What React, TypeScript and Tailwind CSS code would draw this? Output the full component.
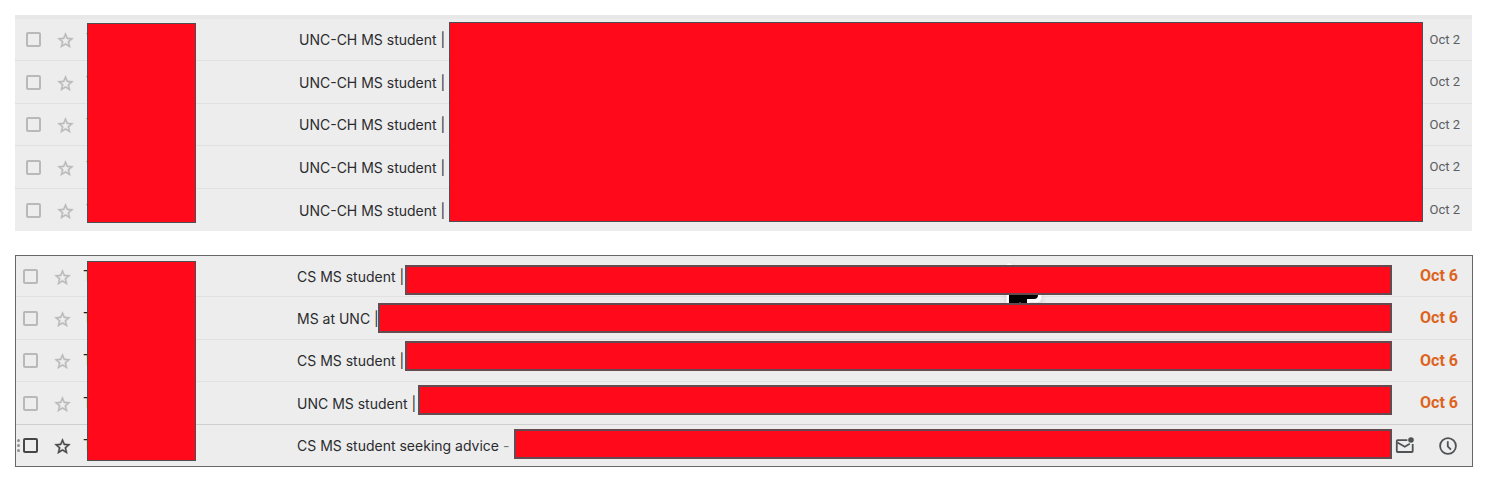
import React from "react";

type Row = {
  id: string;
  subject: string;
  suffix?: string;
  date?: string;
  height: string;
  active?: boolean;
};

const october2: Row[] = [
  { id: "a1", subject: "UNC-CH MS student |", date: "Oct 2", height: "h-[42px]" },
  { id: "a2", subject: "UNC-CH MS student |", date: "Oct 2", height: "h-[43px]" },
  { id: "a3", subject: "UNC-CH MS student |", date: "Oct 2", height: "h-[42px]" },
  { id: "a4", subject: "UNC-CH MS student |", date: "Oct 2", height: "h-[43px]" },
  { id: "a5", subject: "UNC-CH MS student |", date: "Oct 2", height: "h-[42px]" },
];

const october6: Row[] = [
  { id: "b1", subject: "CS MS student |", date: "Oct 6", height: "h-[41px]" },
  { id: "b2", subject: "MS at UNC |", date: "Oct 6", height: "h-[43px]" },
  { id: "b3", subject: "CS MS student |", date: "Oct 6", height: "h-[42px]" },
  { id: "b4", subject: "UNC MS student |", date: "Oct 6", height: "h-[43px]" },
  { id: "b5", subject: "CS MS student seeking advice", suffix: " -", height: "h-[41px]", active: true },
];

const bars = [
  "top-[9px] left-[389px]",
  "top-[47px] left-[362px]",
  "top-[85px] left-[389px]",
  "top-[129px] left-[402px]",
  "top-[173px] left-[498px]",
];

function Star() {
  return (
    <svg viewBox="0 0 24 24" className="size-[19px]" fill="currentColor" stroke="currentColor" strokeWidth="0.5" aria-hidden="true">
      <path d="M22 9.24l-7.19-.62L12 2 9.19 8.63 2 9.24l5.46 4.73L5.82 21 12 17.27 18.18 21l-1.63-7.03L22 9.24zM12 15.4l-3.76 2.27 1-4.28-3.32-2.88 4.38-.38L12 6.1l1.71 4.04 4.38.38-3.32 2.88 1 4.28L12 15.4z" />
    </svg>
  );
}

function MarkUnread() {
  return (
    <svg viewBox="0 0 20 20" className="size-5" fill="none" stroke="currentColor" strokeWidth="1.8" aria-hidden="true">
      <path d="M12.4 4.2H2.6a.8.8 0 0 0-.8.8v10.2c0 .5.3.8.8.8h14.3c.5 0 .8-.3.8-.8V8" />
      <path d="M2.4 6.4 9.8 10.8l5-3" />
      <circle cx="16" cy="4" r="2.8" fill="currentColor" stroke="none" />
    </svg>
  );
}

function Clock() {
  return (
    <svg viewBox="0 0 20 20" className="size-5" fill="none" stroke="currentColor" strokeWidth="1.8" aria-hidden="true">
      <circle cx="10" cy="10" r="7.9" />
      <path d="M9.8 5.2v5.1l3.1 3.3" />
    </svg>
  );
}

function Cursor() {
  return (
    <svg
      viewBox="0 0 40 44"
      className="absolute top-[6px] left-[988px] h-11 w-10 overflow-visible drop-shadow-md"
      aria-hidden="true"
    >
      <path
        d="M4 3v42h21v-6h7q4 0 4-4v-3L6 3z"
        fill="#fff"
        stroke="#fff"
        strokeWidth="3"
        strokeLinejoin="round"
      />
      <path d="M5 6v38h9l2-4 2 4h5v-7h7q4 0 4-4L5 6z" fill="#000" />
    </svg>
  );
}

function MailRow({ row, recent }: { row: Row; recent: boolean }) {
  const tone = row.active ? "text-[#444746]" : "text-[#b9b9b9]";
  return (
    <li
      className={`relative flex items-center border-b last:border-b-0 ${row.height} ${
        row.id === "b4" ? "border-[#cfcfcf]" : "border-[#e1e1e1]"
      } ${recent ? "pl-[7px] pr-[14px]" : "pl-[11px] pr-[12px]"}`}
    >
      {row.active && (
        <span className="absolute left-[1px] flex flex-col gap-[2px]" aria-hidden="true">
          <span className="size-[3px] rounded-full bg-[#909090]" />
          <span className="size-[3px] rounded-full bg-[#909090]" />
          <span className="size-[3px] rounded-full bg-[#909090]" />
        </span>
      )}
      <input
        type="checkbox"
        aria-label={`Select ${row.subject}`}
        className={`size-[15px] shrink-0 appearance-none rounded-[2px] border-2 border-current ${tone}`}
      />
      <button type="button" aria-label="Star" className={`ml-[15px] shrink-0 pt-[2px] ${tone}`}>
        <Star />
      </button>
      <span className={`shrink-0 text-[15px] text-[#1f1f1f] ${recent ? "ml-[11px] w-[214px]" : "ml-[11px] w-[213px]"}`}>T</span>
      <a href="#" className="min-w-0 flex-1 truncate text-[14px] text-[#2b2b2e]">
        {row.subject}
        {row.suffix && <span className="text-[#75797c]">{row.suffix}</span>}
      </a>
      {row.date && (
        <time
          className={`font-['Roboto',sans-serif] ${
            recent ? "text-[16px] font-bold text-[#dc6420]" : "text-[13px] text-[#5a5d62]"
          }`}
        >
          {row.date}
        </time>
      )}
      {row.active && (
        <span className="flex gap-[23px] text-[#505355]">
          <button type="button" aria-label="Mark as unread">
            <MarkUnread />
          </button>
          <button type="button" aria-label="Snooze">
            <Clock />
          </button>
        </span>
      )}
    </li>
  );
}

export default function App() {
  return (
    <main className="flex flex-col gap-6 bg-white pt-[15px] pr-[18px] pb-[11px] pl-[15px] font-['Inter',sans-serif]">
      <section className="relative mr-px border-t-4 border-[#e8e8e8] bg-[#ededed]">
        <ul>
          {october2.map((row) => (
            <MailRow key={row.id} row={row} recent={false} />
          ))}
        </ul>
        <div className="absolute top-[4px] left-[72px] h-[200px] w-[109px] border border-[#4d5052] bg-[#ff091b]" />
        <div className="absolute top-[3px] right-[49px] left-[434px] h-[200px] border border-[#4d5052] bg-[#ff091b]" />
      </section>
      <section className="relative border border-[#666769] bg-[#ededed]">
        <ul>
          {october6.map((row) => (
            <MailRow key={row.id} row={row} recent />
          ))}
        </ul>
        <Cursor />
        <div className="absolute top-[5px] left-[71px] h-[200px] w-[109px] border border-[#4d5052] bg-[#ff091b]" />
        {bars.map((place) => (
          <div key={place} className={`absolute right-[80px] h-[30px] border-2 border-[#654b50] bg-[#ff091b] ${place}`} />
        ))}
      </section>
    </main>
  );
}
